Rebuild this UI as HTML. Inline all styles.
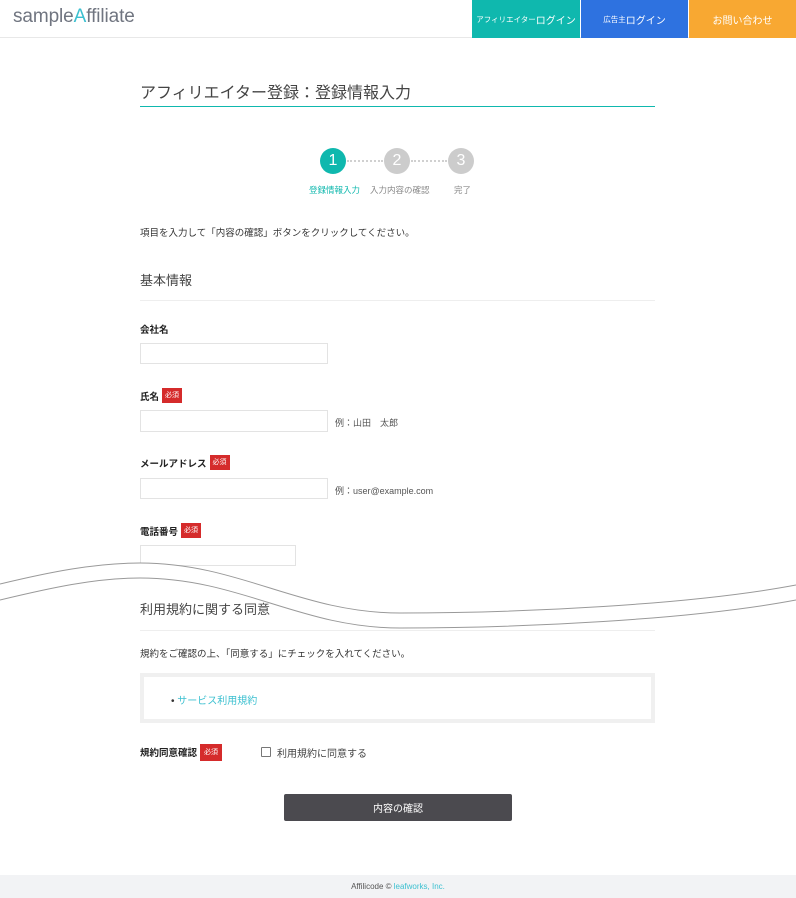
<!DOCTYPE html>
<html><head><meta charset="utf-8"><style>
*{margin:0;padding:0;box-sizing:border-box}
body{width:796px;height:898px;position:relative;background:#fff;font-family:"Liberation Sans","Noto Sans CJK JP",sans-serif;color:#333;overflow:hidden}
.a{position:absolute;white-space:nowrap}
.hdr{position:absolute;left:0;top:0;width:796px;height:38px;border-bottom:1px solid #e8e8e8}
.nb{position:absolute;top:0;height:38px;color:#fff;font-size:10px;display:flex;align-items:center;justify-content:center}
.inp{position:absolute;border:1px solid #e3e3e3;background:#fff;height:21px}
.lbl{position:absolute;font-size:9.5px;font-weight:bold;color:#222;display:flex;align-items:center;white-space:nowrap}
.req{display:inline-block;background:#d52b2b;color:#fff;font-size:7px;font-weight:normal;padding:3px 3px;margin-left:3px;line-height:9px}
.ex{position:absolute;font-size:9px;color:#555}
.c{position:absolute;width:26px;height:26px;border-radius:50%;color:#fff;font-size:16px;display:flex;align-items:center;justify-content:center}
</style></head><body>
<div class="hdr"></div>
<div class="a" style="left:13px;top:6px;font-size:19px;color:#707580;letter-spacing:-0.1px">sample<span style="color:#3cc0d0">A</span>ffiliate</div>
<div class="nb" style="left:472px;width:108px;background:#0fb8ae"><span style="font-size:7.5px">アフィリエイター</span>ログイン</div>
<div class="nb" style="left:581px;width:107px;background:#2e72e0"><span style="font-size:7.5px">広告主</span>ログイン</div>
<div class="nb" style="left:689px;width:107px;background:#f8a832">お問い合わせ</div>

<div class="a" style="left:140px;top:79px;font-size:16px;color:#444">アフィリエイター登録：登録情報入力</div>
<div class="a" style="left:140px;top:106px;width:515px;height:1px;background:#0fb8ae"></div>

<div class="a" style="left:347px;top:160px;width:36px;border-top:2px dotted #d0d0d0"></div>
<div class="a" style="left:411px;top:160px;width:36px;border-top:2px dotted #d0d0d0"></div>
<div class="c" style="left:320px;top:148px;background:#0fb8ae">1</div>
<div class="c" style="left:384px;top:148px;background:#ccc">2</div>
<div class="c" style="left:448px;top:148px;background:#ccc">3</div>
<div class="a" style="left:309px;top:184px;font-size:8.5px;color:#0fb8ae">登録情報入力</div>
<div class="a" style="left:370px;top:184px;font-size:8.5px;color:#888">入力内容の確認</div>
<div class="a" style="left:454px;top:184px;font-size:8.5px;color:#888">完了</div>

<div class="a" style="left:140px;top:225px;font-size:9.5px;color:#333">項目を入力して「内容の確認」ボタンをクリックしてください。</div>
<div class="a" style="left:140px;top:270px;font-size:13px;color:#444">基本情報</div>
<div class="a" style="left:140px;top:300px;width:515px;height:1px;background:#eee"></div>

<div class="lbl" style="left:140px;top:322px;height:13px">会社名</div>
<div class="inp" style="left:140px;top:343px;width:188px"></div>
<div class="lbl" style="left:140px;top:388px;height:15px">氏名<span class="req">必須</span></div>
<div class="inp" style="left:140px;top:410px;width:188px;height:22px"></div>
<div class="ex" style="left:335px;top:416px">例：山田　太郎</div>
<div class="lbl" style="left:140px;top:455px;height:15px">メールアドレス<span class="req">必須</span></div>
<div class="inp" style="left:140px;top:478px;width:188px"></div>
<div class="ex" style="left:335px;top:484px">例：user@example.com</div>
<div class="lbl" style="left:140px;top:523px;height:15px">電話番号<span class="req">必須</span></div>
<div class="inp" style="left:140px;top:545px;width:156px"></div>

<svg class="a" style="left:0;top:555px" width="796" height="80" viewBox="0 555 796 80">
<path d="M0,584 C50,572 95,563 140,563 C240,563 300,613 400,613 C520,613 690,605 796,585 L796,600 C690,620 520,628 400,628 C300,628 240,578 140,578 C95,578 50,588 0,600 Z" fill="#fff"/>
<path d="M0,584 C50,572 95,563 140,563 C240,563 300,613 400,613 C520,613 690,605 796,585" fill="none" stroke="#999" stroke-width="1"/>
<path d="M0,600 C50,588 95,578 140,578 C240,578 300,628 400,628 C520,628 690,620 796,600" fill="none" stroke="#999" stroke-width="1"/>
</svg>

<div class="a" style="left:140px;top:599px;font-size:13px;color:#444">利用規約に関する同意</div>
<div class="a" style="left:140px;top:630px;width:515px;height:1px;background:#eee"></div>
<div class="a" style="left:140px;top:646px;font-size:9.5px;color:#333">規約をご確認の上、「同意する」にチェックを入れてください。</div>
<div class="a" style="left:140px;top:673px;width:515px;height:50px;border:4px solid #f0f0f0"></div>
<div class="a" style="left:171px;top:692px;font-size:10px;color:#333">•&nbsp;<span style="color:#3cc0d0">サービス利用規約</span></div>
<div class="lbl" style="left:140px;top:744px;height:16px">規約同意確認<span class="req" style="padding:4px 4px">必須</span></div>
<div class="a" style="left:261px;top:747px;width:10px;height:10px;border:1.5px solid #777;border-radius:1px"></div>
<div class="a" style="left:277px;top:745px;font-size:10px;color:#444">利用規約に同意する</div>
<div class="a" style="left:284px;top:794px;width:228px;height:27px;background:#4b4a4f;border-radius:2px;color:#fff;font-size:10px;display:flex;align-items:center;justify-content:center">内容の確認</div>

<div class="a" style="left:0;top:875px;width:796px;height:23px;background:#f2f3f5;font-size:8px;color:#555;display:flex;align-items:center;justify-content:center">Affilicode © <span style="color:#3cc0d0">&nbsp;leafworks, Inc.</span></div>
</body></html>
